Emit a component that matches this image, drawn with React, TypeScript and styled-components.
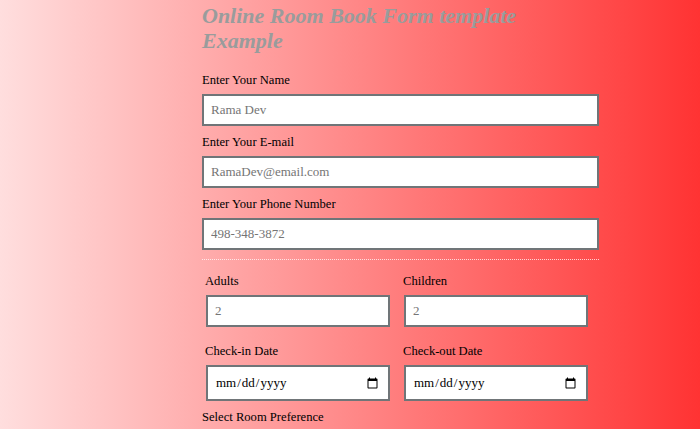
import React from "react";
import styled, { createGlobalStyle } from "styled-components";

const GlobalStyle = createGlobalStyle`
  html, body {
    margin: 0;
    padding: 0;
  }
  body {
    min-height: 429px;
    background: linear-gradient(to right, #ffdede, #ff3333);
    font-family: "Liberation Serif", "Times New Roman", serif;
    overflow: hidden;
  }
`;

const Page = styled.div`
  padding: 3px 0 0 202px;
  min-height: 429px;
  box-sizing: border-box;
`;

const Form = styled.form`
  width: 397px;
  display: flex;
  flex-direction: column;
`;

const Title = styled.h2`
  margin: 0;
  font-family: "Liberation Serif", "Times New Roman", serif;
  font-size: 22px;
  line-height: 25px;
  font-weight: bold;
  font-style: italic;
  color: #999c9c;
`;

const Label = styled.label`
  display: block;
  font-size: 12.6px;
  line-height: 14px;
  color: #000;
  margin: 0 0 7px;
`;

const FirstLabel = styled(Label)`
  margin-top: 20px;
`;

const TextInput = styled.input<{ $wide?: boolean }>`
  box-sizing: border-box;
  width: ${(p) => (p.$wide ? "397px" : "184px")};
  height: 32px;
  margin: 0 0 9px;
  padding: 0 7px;
  border: 2px solid #707578;
  background: #fff;
  font-family: "Liberation Serif", "Times New Roman", serif;
  font-size: 13px;
  color: #000;
  outline: none;
  &::placeholder {
    color: #757575;
  }
`;

const DateInput = styled.input`
  box-sizing: border-box;
  width: 184px;
  height: 36px;
  margin: 0;
  padding: 0 7px;
  border: 2px solid #707578;
  background: #fff;
  font-family: "Liberation Serif", "Times New Roman", serif;
  font-size: 13px;
  color: #000;
  outline: none;
`;

const Divider = styled.div`
  border-top: 1px dotted rgba(255, 255, 255, 0.75);
  height: 0;
`;

const Row = styled.div<{ $top: number }>`
  display: grid;
  grid-template-columns: 198px 198px;
  margin-top: ${(p) => p.$top}px;
`;

const Col = styled.div`
  padding-left: 4px;
  display: flex;
  flex-direction: column;
`;

const ColLabel = styled(Label)`
  margin-left: -1px;
`;

const BottomLabel = styled(Label)`
  margin-top: 9px;
`;

export default function App() {
  return (
    <>
      <GlobalStyle />
      <Page>
        <Form onSubmit={(e) => e.preventDefault()}>
          <Title>Online Room Book Form template Example</Title>
          <FirstLabel>Enter Your Name</FirstLabel>
          <TextInput $wide type="text" placeholder="Rama Dev" />
          <Label>Enter Your E-mail</Label>
          <TextInput $wide type="email" placeholder="RamaDev@email.com" />
          <Label>Enter Your Phone Number</Label>
          <TextInput $wide type="tel" placeholder="498-348-3872" />
          <Divider />
          <Row $top={14}>
            <Col>
              <ColLabel>Adults</ColLabel>
              <TextInput type="number" placeholder="2" />
            </Col>
            <Col>
              <ColLabel>Children</ColLabel>
              <TextInput type="number" placeholder="2" />
            </Col>
          </Row>
          <Row $top={8}>
            <Col>
              <ColLabel>Check-in Date</ColLabel>
              <DateInput type="date" />
            </Col>
            <Col>
              <ColLabel>Check-out Date</ColLabel>
              <DateInput type="date" />
            </Col>
          </Row>
          <BottomLabel>Select Room Preference</BottomLabel>
        </Form>
      </Page>
    </>
  );
}
